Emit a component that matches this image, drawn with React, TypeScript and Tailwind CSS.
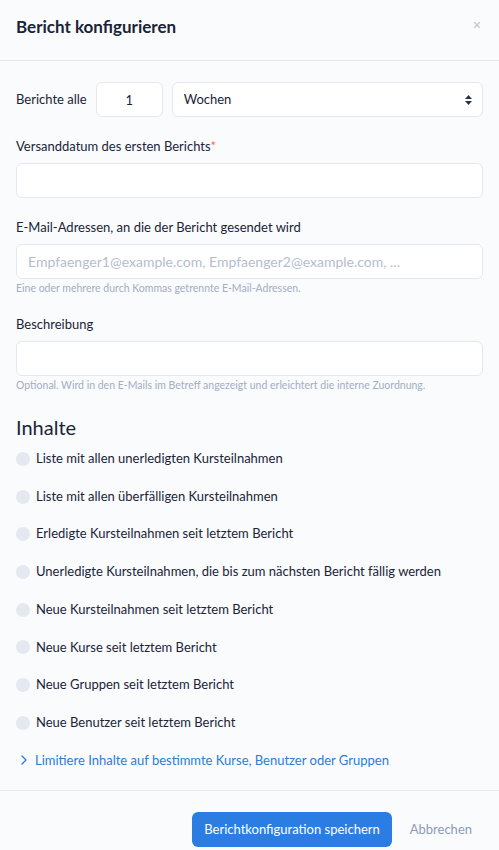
import { ChevronRight, X } from 'lucide-react';

const contentOptions = [
  'Liste mit allen unerledigten Kursteilnahmen',
  'Liste mit allen überfälligen Kursteilnahmen',
  'Erledigte Kursteilnahmen seit letztem Bericht',
  'Unerledigte Kursteilnahmen, die bis zum nächsten Bericht fällig werden',
  'Neue Kursteilnahmen seit letztem Bericht',
  'Neue Kurse seit letztem Bericht',
  'Neue Gruppen seit letztem Bericht',
  'Neue Benutzer seit letztem Bericht',
];

const inputClass =
  'w-full h-[35px] px-[11px] rounded-md border border-[#e3e8ef] bg-white text-[13px] text-[#1b2437] placeholder:text-[#b4bdd0] placeholder:text-[14px] outline-none';

export default function App() {
  return (
    <div className="min-h-screen bg-[#f9fbfd] font-['Lato',sans-serif] text-[#1b2437]">
      {/* Header */}
      <div className="h-[61px] px-4 pb-[6px] flex items-center justify-between border-b border-[#e6eaf0]">
        <h1 className="text-[17px] font-bold">Bericht konfigurieren</h1>
        <button className="text-[#c3c9d4] mr-[1px] -mt-[4px]">
          <X className="w-[10px] h-[10px]" strokeWidth={3} />
        </button>
      </div>

      {/* Form */}
      <div className="px-4 pt-[21px]">
        <div className="flex items-center gap-[9px]">
          <span className="text-[13px]">Berichte alle</span>
          <input
            type="text"
            defaultValue="1"
            className="w-[67px] h-[35px] rounded-md border border-[#e3e8ef] bg-white text-center text-[13px] outline-none"
          />
          <div className="relative flex-1">
            <select className="w-full h-[35px] appearance-none rounded-md border border-[#e3e8ef] bg-white pl-[11px] text-[13px] outline-none">
              <option>Wochen</option>
            </select>
            <svg
              className="absolute right-[11px] top-[13px] w-[7px] h-[10px] pointer-events-none"
              viewBox="0 0 7 10"
              fill="#2b3445"
            >
              <path d="M3.5 0 L7 4 H0 Z" />
              <path d="M3.5 10 L7 6 H0 Z" />
            </svg>
          </div>
        </div>

        <div className="mt-[19px]">
          <label className="block text-[13px] leading-[20px] mb-[7px]">
            Versanddatum des ersten Berichts<span className="text-[#ef6b4a]">*</span>
          </label>
          <input type="text" className={inputClass} />
        </div>

        <div className="mt-[19px]">
          <label className="block text-[13px] leading-[20px] mb-[7px]">
            E-Mail-Adressen, an die der Bericht gesendet wird
          </label>
          <input
            type="text"
            placeholder="Empfaenger1@example.com, Empfaenger2@example.com, ..."
            className={inputClass}
          />
          <p className="mt-[1px] text-[10.5px] leading-[16px] text-[#a3adc3]">
            Eine oder mehrere durch Kommas getrennte E-Mail-Adressen.
          </p>
        </div>

        <div className="mt-[18px]">
          <label className="block text-[13px] leading-[20px] mb-[7px]">Beschreibung</label>
          <input type="text" className={inputClass} />
          <p className="mt-[1px] text-[10.5px] leading-[16px] text-[#a3adc3]">
            Optional. Wird in den E-Mails im Betreff angezeigt und erleichtert die interne Zuordnung.
          </p>
        </div>

        {/* Contents */}
        <h2 className="mt-[21px] text-[20px] leading-[26px]">Inhalte</h2>
        <div className="flex flex-col">
          {contentOptions.map((label) => (
            <label key={label} className="flex items-center gap-[6px] h-[37.7px] text-[13px]">
              <span className="w-[14px] h-[14px] rounded-full bg-[#e4e8f0] shrink-0" />
              {label}
            </label>
          ))}
        </div>

        <button className="h-[37.7px] flex items-center gap-[3px] text-[13px] text-[#2d7cd6]">
          <ChevronRight className="w-[16px] h-[16px]" strokeWidth={2} />
          Limitiere Inhalte auf bestimmte Kurse, Benutzer oder Gruppen
        </button>
      </div>

      {/* Footer */}
      <div className="mt-[11px] border-t border-[#e6eaf0] pt-[21px] px-4 flex justify-end items-center gap-[18px]">
        <button className="h-[35px] px-[12px] rounded-md bg-[#2b7de1] text-white text-[13px]">
          Berichtkonfiguration speichern
        </button>
        <button className="text-[13px] text-[#8f9bb3] mr-[11px]">Abbrechen</button>
      </div>
    </div>
  );
}
